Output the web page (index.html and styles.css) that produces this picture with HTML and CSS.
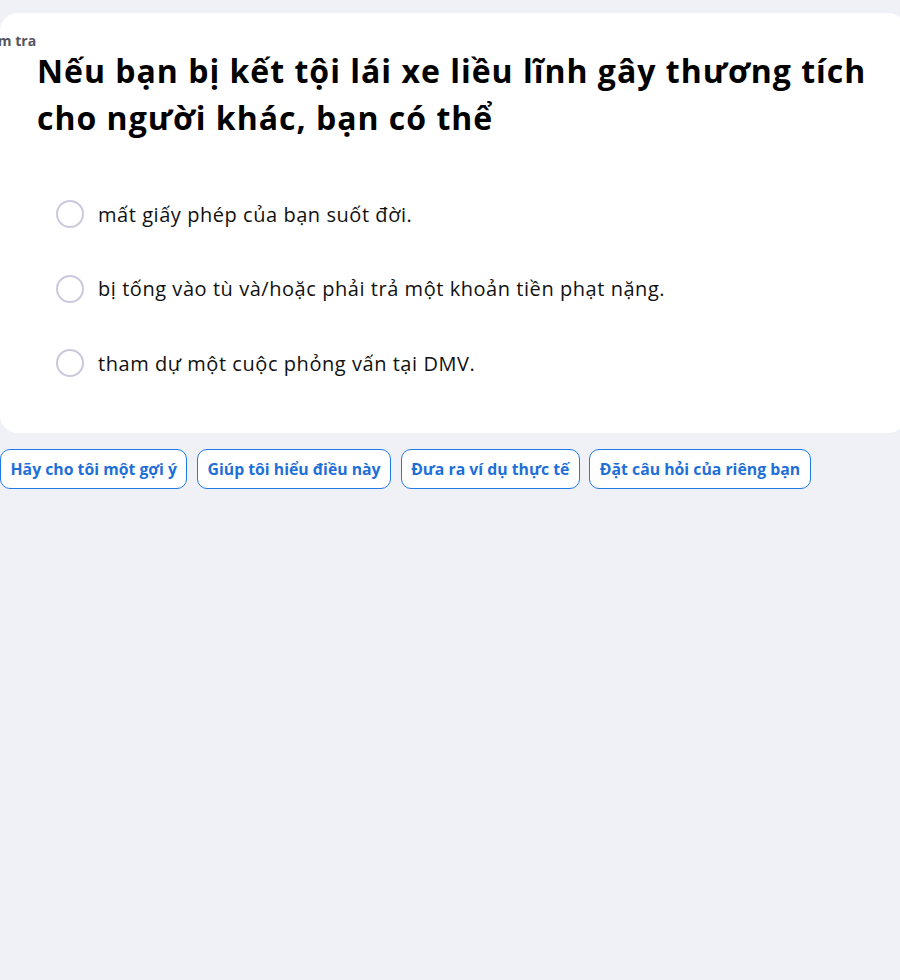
FILE: index.html
```html
<!DOCTYPE html>
<html lang="vi">
<head>
<meta charset="utf-8">
<link rel="stylesheet" href="styles.css">
</head>
<body>
<main class="page">
  <section class="card">
    <div class="label">Kiểm tra</div>
    <h1 class="title">Nếu bạn bị kết tội lái xe liều lĩnh gây thương tích cho người khác, bạn có thể</h1>
    <ul class="options">
      <li class="option"><span class="radio"></span><span class="opt-text">mất giấy phép của bạn suốt đời.</span></li>
      <li class="option"><span class="radio"></span><span class="opt-text">bị tống vào tù và/hoặc phải trả một khoản tiền phạt nặng.</span></li>
      <li class="option"><span class="radio"></span><span class="opt-text">tham dự một cuộc phỏng vấn tại DMV.</span></li>
    </ul>
  </section>
  <div class="actions">
    <button class="chip">Hãy cho tôi một gợi ý</button>
    <button class="chip">Giúp tôi hiểu điều này</button>
    <button class="chip">Đưa ra ví dụ thực tế</button>
    <button class="chip">Đặt câu hỏi của riêng bạn</button>
  </div>
</main>
</body>
</html>
```
FILE: styles.css
```css
html, body {
  margin: 0;
  padding: 0;
  overflow: hidden;
}
body {
  background: #f0f1f6;
  font-family: "Open Sans", sans-serif;
  width: 900px;
  height: 980px;
}
.page {
  padding-top: 13px;
}
.card {
  background: #ffffff;
  border-radius: 18px;
  width: 906px;
  box-sizing: border-box;
  padding: 20px 30px 32px 37px;
}
.label {
  margin-left: -61px;
  font-size: 14px;
  font-weight: 700;
  line-height: 16px;
  color: #55555f;
}
.title {
  margin: -2px 0 0 0;
  font-size: 32px;
  line-height: 47px;
  font-weight: 700;
  letter-spacing: 1px;
  color: #000000;
}
.options {
  list-style: none;
  margin: 36px 0 0 0;
  padding: 0 0 0 19px;
}
.option {
  display: flex;
  align-items: center;
  gap: 14px;
  height: 74.5px;
}
.radio {
  flex: none;
  width: 28px;
  height: 28px;
  box-sizing: border-box;
  border: 2px solid #cbc9dc;
  border-radius: 50%;
}
.opt-text {
  font-size: 20px;
  letter-spacing: 0.55px;
  color: #111111;
}
.actions {
  display: flex;
  gap: 9.5px;
  margin-top: 16px;
}
.chip {
  height: 40px;
  padding: 0 9.5px;
  border: 1px solid #1f7ae6;
  border-radius: 10px;
  background: #ffffff;
  color: #1f6fd8;
  font-family: "Open Sans", sans-serif;
  font-size: 15.8px;
  font-weight: 700;
  cursor: pointer;
}
```
